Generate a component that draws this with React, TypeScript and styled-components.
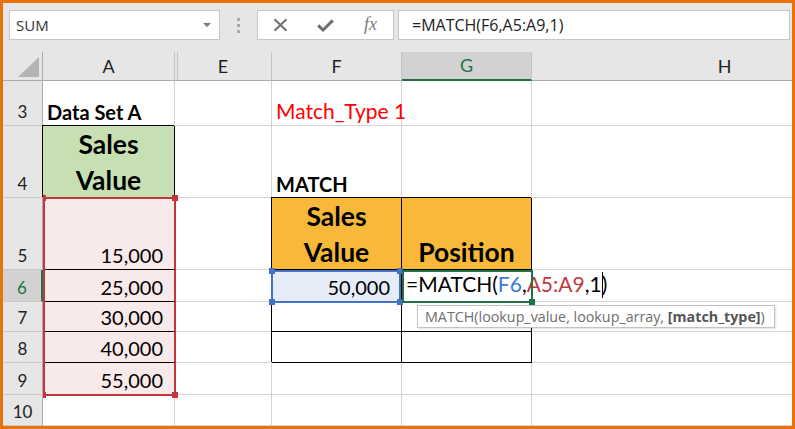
import React from "react";
import styled, { createGlobalStyle, css } from "styled-components";

const GlobalStyle = createGlobalStyle`
  html, body {
    margin: 0;
    padding: 0;
    background: #fff;
  }
  body {
    font-family: "Lato", "Liberation Sans", sans-serif;
  }
`;

const Frame = styled.div`
  box-sizing: border-box;
  width: 795px;
  height: 429px;
  border: 3px solid #e8720c;
  background: #e6e6e6;
  overflow: hidden;
  display: flex;
  flex-direction: column;
`;

const Toolbar = styled.div`
  box-sizing: border-box;
  height: 49px;
  flex: none;
  display: flex;
  align-items: flex-start;
  padding: 7px 2px 0 6px;
`;

const NameBox = styled.div`
  box-sizing: border-box;
  width: 211px;
  height: 30px;
  background: #fff;
  border: 1px solid #c6c6c6;
  display: flex;
  align-items: center;
  justify-content: space-between;
  padding: 0 8px 0 6px;
  font-family: "Open Sans", sans-serif;
  font-size: 15px;
  color: #333;
`;

const DropArrow = styled.span`
  width: 0;
  height: 0;
  border-style: solid;
  border-width: 4px 4px 0 4px;
  border-color: #7a7a7a transparent transparent transparent;
`;

const Grip = styled.div`
  display: flex;
  flex-direction: column;
  gap: 3px;
  margin: 8px 0 0 17px;
`;

const Dot = styled.span`
  width: 3px;
  height: 3px;
  background: #a9a9a9;
`;

const ButtonGroup = styled.div`
  box-sizing: border-box;
  width: 137px;
  height: 30px;
  margin-left: 17px;
  background: #fff;
  border: 1px solid #c6c6c6;
  display: flex;
  align-items: center;
`;

const ToolButton = styled.span`
  width: 45px;
  display: flex;
  justify-content: center;
  align-items: center;
  color: #6d6d6d;
`;

const Fx = styled.span`
  font-family: "Liberation Serif", serif;
  font-style: italic;
  font-size: 18px;
  color: #7a7a7a;
  margin-top: -2px;
`;

const FormulaBar = styled.div`
  box-sizing: border-box;
  flex: 1;
  height: 30px;
  margin-left: 4px;
  background: #fff;
  border: 1px solid #c6c6c6;
  display: flex;
  align-items: center;
  padding-left: 13px;
  font-family: "Open Sans", sans-serif;
  font-size: 16px;
  color: #222;
`;

/* column H runs on past the window edge, so its letter sits right of centre */
const template = css`
  display: grid;
  grid-template-columns: 40px 132px 97px 130px 130px 386px;
  grid-template-rows: 29px 45px 72px 72px 32px 30px 31px 32px 31px;
`;

const Stack = styled.div`
  flex: 1;
  min-height: 0;
  display: grid;
  justify-content: start;
`;

const Sheet = styled.div`
  ${template};
  grid-area: 1 / 1;
  background: #fff;
  color: #000;
`;

const Marks = styled.div`
  ${template};
  grid-area: 1 / 1;
  pointer-events: none;
`;

const Corner = styled.div`
  box-sizing: border-box;
  position: relative;
  background: #e6e6e6;
  border-right: 1px solid #ababab;
  border-bottom: 1px solid #ababab;

  &::after {
    content: "";
    position: absolute;
    right: 3px;
    bottom: 3px;
    border-style: solid;
    border-width: 0 0 20px 21px;
    border-color: transparent transparent #b4b4b4 transparent;
  }
`;

const ColHead = styled.div<{ $active?: boolean; $gap?: boolean }>`
  box-sizing: border-box;
  position: relative;
  display: flex;
  align-items: flex-end;
  justify-content: center;
  padding-bottom: 3px;
  font-size: 18px;
  line-height: 22px;
  background: ${({ $active }) => ($active ? "#d2d2d2" : "#e6e6e6")};
  color: ${({ $active }) => ($active ? "#217346" : "#222")};
  border-right: 1px solid #c3c3c3;
  border-bottom: ${({ $active }) => ($active ? "2px solid #217346" : "1px solid #ababab")};

  ${({ $gap }) =>
    $gap &&
    css`
      &::before {
        content: "";
        position: absolute;
        left: 2px;
        top: 0;
        bottom: 0;
        width: 1px;
        background: #c3c3c3;
      }
    `}
`;

const RowHead = styled.div<{ $active?: boolean }>`
  box-sizing: border-box;
  display: flex;
  align-items: flex-end;
  justify-content: center;
  padding-bottom: 3px;
  font-size: 17px;
  line-height: 20px;
  background: ${({ $active }) => ($active ? "#d2d2d2" : "#e6e6e6")};
  color: ${({ $active }) => ($active ? "#217346" : "#222")};
  border-right: ${({ $active }) => ($active ? "2px solid #217346" : "1px solid #ababab")};
  border-bottom: 1px solid #c8c8c8;
`;

type Align = "left" | "center" | "right";

const Cell = styled.div<{ $fill?: string; $boxed?: boolean; $align?: Align; $line?: string }>`
  box-sizing: border-box;
  min-width: 0;
  display: flex;
  align-items: flex-end;
  justify-content: ${({ $align }) =>
    $align === "right" ? "flex-end" : $align === "center" ? "center" : "flex-start"};
  padding: 0 4px 2px;
  white-space: nowrap;
  font-size: 20px;
  line-height: 24px;
  background: ${({ $fill }) => $fill ?? "transparent"};
  border-right: 1px solid #d4d4d4;
  border-bottom: 1px solid ${({ $line }) => $line ?? "#d4d4d4"};

  ${({ $boxed }) =>
    $boxed &&
    css`
      border-right-color: #000;
      border-bottom-color: #000;
      box-shadow: -1px -1px 0 #000;
    `}
`;

const Title = styled.span`
  font-weight: 700;
  font-size: 20px;
  line-height: 22px;
`;

const Note = styled.span`
  color: #ff0000;
  font-size: 21px;
`;

const Heading = styled.span`
  font-weight: 700;
  font-size: 26.5px;
  line-height: 36px;
  text-align: center;
  margin-bottom: -3px;
`;

const Amount = styled.span`
  font-size: 20px;
  padding-right: 7px;
`;

const Formula = styled.span`
  font-size: 21px;
  padding-bottom: 1px;
`;

const Ref = styled.span<{ $color: string }>`
  color: ${({ $color }) => $color};
`;

const Caret = styled.span`
  display: inline-block;
  width: 1px;
  height: 26px;
  margin-right: -1px;
  background: #000;
  vertical-align: -6px;
`;

const Range = styled.div<{ $color: string; $col: string; $row: string; $inset: string }>`
  position: relative;
  grid-column: ${({ $col }) => $col};
  grid-row: ${({ $row }) => $row};
  margin: ${({ $inset }) => $inset};
  border: 2px solid ${({ $color }) => $color};
`;

const Handle = styled.span<{ $v: "top" | "bottom"; $h: "left" | "right"; $color: string; $thin?: boolean }>`
  position: absolute;
  ${({ $v }) => $v}: -4px;
  ${({ $h }) => $h}: ${({ $thin }) => ($thin ? "-2px" : "-4px")};
  width: ${({ $thin }) => ($thin ? "3px" : "6px")};
  height: 6px;
  background: ${({ $color }) => $color};
`;

const Tooltip = styled.div`
  grid-column: 5 / 7;
  grid-row: 6;
  justify-self: start;
  align-self: start;
  margin: 3px 0 0 15px;
  box-sizing: border-box;
  height: 23px;
  padding: 0 9px 0 7px;
  display: flex;
  align-items: center;
  background: #fff;
  border: 1px solid #c3c3c3;
  box-shadow: 1px 1px 2px rgba(0, 0, 0, 0.12);
  font-family: "Open Sans", sans-serif;
  font-size: 14.3px;
  color: #6e6e6e;
  white-space: nowrap;

  b {
    color: #555;
  }
`;

const RED = "#c4363d";
const BLUE = "#4472c4";
const GREEN = "#217346";
const PINK = "#f8e9ea";
const GOLD = "#f8b93b";

const amounts = ["15,000", "25,000", "30,000", "40,000", "55,000"];

export default function App() {
  return (
    <>
      <GlobalStyle />
      <Frame>
        <Toolbar>
          <NameBox>
            SUM
            <DropArrow />
          </NameBox>
          <Grip>
            <Dot />
            <Dot />
            <Dot />
          </Grip>
          <ButtonGroup>
            <ToolButton>
              <svg width="15" height="14" viewBox="0 0 15 14">
                <path d="M1.5 1.2L13.5 12.8M13.5 1.2L1.5 12.8" stroke="currentColor" strokeWidth="1.9" fill="none" />
              </svg>
            </ToolButton>
            <ToolButton>
              <svg width="17" height="13" viewBox="0 0 17 13">
                <path d="M1.2 6.4L6 11L15.8 1.4" stroke="currentColor" strokeWidth="2.9" fill="none" />
              </svg>
            </ToolButton>
            <ToolButton>
              <Fx>fx</Fx>
            </ToolButton>
          </ButtonGroup>
          <FormulaBar>=MATCH(F6,A5:A9,1)</FormulaBar>
        </Toolbar>

        <Stack>
          <Sheet>
            <Corner />
            <ColHead>A</ColHead>
            <ColHead $gap>E</ColHead>
            <ColHead>F</ColHead>
            <ColHead $active>G</ColHead>
            <ColHead>H</ColHead>

            <RowHead>3</RowHead>
            <Cell>
              <Title>Data Set A</Title>
            </Cell>
            <Cell />
            <Cell>
              <Note>Match_Type 1</Note>
            </Cell>
            <Cell />
            <Cell />

            <RowHead>4</RowHead>
            <Cell $fill="#c6e0b4" $boxed $align="center">
              <Heading>
                Sales
                <br />
                Value
              </Heading>
            </Cell>
            <Cell />
            <Cell>
              <Title>MATCH</Title>
            </Cell>
            <Cell />
            <Cell />

            {amounts.map((value, i) => {
              const row = i + 5;
              return (
                <React.Fragment key={value}>
                  <RowHead $active={row === 6}>{row}</RowHead>
                  <Cell $fill={PINK} $align="right" $line={row < 9 ? "#000" : undefined}>
                    <Amount>{value}</Amount>
                  </Cell>
                  <Cell />
                  {row === 5 && (
                    <>
                      <Cell $fill={GOLD} $boxed $align="center">
                        <Heading>
                          Sales
                          <br />
                          Value
                        </Heading>
                      </Cell>
                      <Cell $fill={GOLD} $boxed $align="center">
                        <Heading>Position</Heading>
                      </Cell>
                    </>
                  )}
                  {row === 6 && (
                    <>
                      <Cell $fill="#e7edf8" $boxed $align="right">
                        <Amount>50,000</Amount>
                      </Cell>
                      <Cell $boxed>
                        <Formula>
                          =MATCH(<Ref $color="#3c78d8">F6</Ref>,<Ref $color={RED}>A5:A9</Ref>,1
                          <Caret />)
                        </Formula>
                      </Cell>
                    </>
                  )}
                  {(row === 7 || row === 8) && (
                    <>
                      <Cell $boxed />
                      <Cell $boxed />
                    </>
                  )}
                  {row === 9 && (
                    <>
                      <Cell />
                      <Cell />
                    </>
                  )}
                  <Cell />
                </React.Fragment>
              );
            })}

            <RowHead>10</RowHead>
            <Cell />
            <Cell />
            <Cell />
            <Cell />
            <Cell />
          </Sheet>

          <Marks>
            <Range $color={RED} $col="2" $row="4 / 9" $inset="-1px -1px -1px 0">
              <Handle $v="top" $h="left" $color={RED} $thin />
              <Handle $v="top" $h="right" $color={RED} />
              <Handle $v="bottom" $h="left" $color={RED} $thin />
              <Handle $v="bottom" $h="right" $color={RED} />
            </Range>
            <Range $color={BLUE} $col="4" $row="5" $inset="0 1px -1px -1px">
              <Handle $v="top" $h="left" $color={BLUE} />
              <Handle $v="top" $h="right" $color={BLUE} />
              <Handle $v="bottom" $h="left" $color={BLUE} />
              <Handle $v="bottom" $h="right" $color={BLUE} />
            </Range>
            <Range $color={GREEN} $col="5" $row="5" $inset="0 -1px -1px 0">
              <Handle $v="bottom" $h="right" $color={GREEN} />
            </Range>
            <Tooltip>
              MATCH(lookup_value, lookup_array,&nbsp;<b>[match_type]</b>)
            </Tooltip>
          </Marks>
        </Stack>
      </Frame>
    </>
  );
}
